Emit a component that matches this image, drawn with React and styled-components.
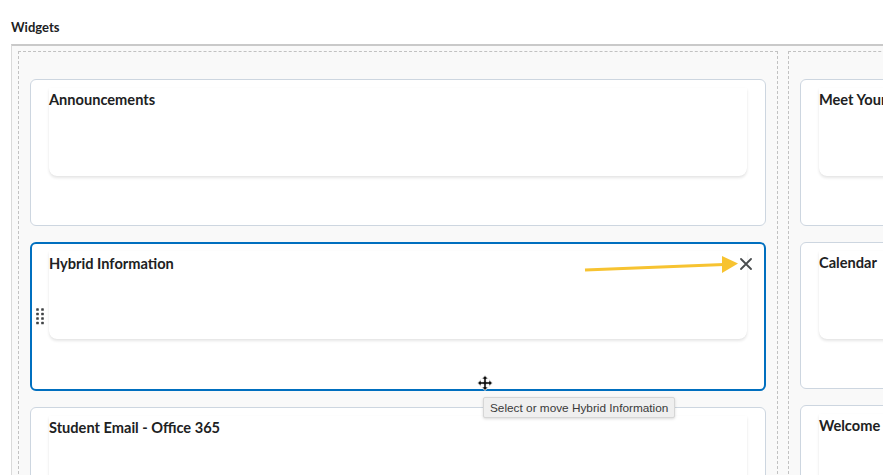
import React from "react";
import styled, { createGlobalStyle } from "styled-components";

const Global = createGlobalStyle`
  html, body { margin: 0; padding: 0; background: #ffffff; overflow: hidden; }
  body { font-family: Lato, "Open Sans", sans-serif; color: #202122; }
`;

const Page = styled.div`
  position: relative;
  width: 883px;
  height: 475px;
  overflow: hidden;
  padding-left: 11px;
  box-sizing: border-box;
`;

const Heading = styled.h2`
  margin: 0;
  padding-top: 19px;
  margin-bottom: 9px;
  font-size: 13px;
  line-height: 16px;
  font-weight: 700;
  color: #202122;
`;

const Board = styled.div`
  display: flex;
  gap: 10px;
  width: 1700px;
  height: 500px;
  box-sizing: border-box;
  padding: 5px 0 0 6px;
  background: #f9f9f9;
  border-top: 2px solid #c9c9c9;
  border-left: 1px solid #dadada;
`;

const Column = styled.div`
  display: flex;
  flex-direction: column;
  gap: 16px;
  width: 760px;
  flex: none;
  box-sizing: border-box;
  padding: 27px 11px 0 11px;
  border: 1px dashed #c2c2c2;
  border-bottom: none;
`;

const Card = styled.div`
  position: relative;
  flex: none;
  box-sizing: border-box;
  height: ${(p) => (p.$active ? 149 : 147)}px;
  background: #ffffff;
  border-radius: 6px;
  border: ${(p) => (p.$active ? "2px solid #006fbf" : "1px solid #cdd6e0")};
  padding: ${(p) => (p.$active ? "7px 17px 0" : "8px 18px 0")};
`;

const Inner = styled.div`
  height: 88px;
  background: #ffffff;
  border-radius: 0 0 8px 8px;
  box-shadow: 0 2px 3px rgba(0, 0, 0, 0.1), 0 0 1px rgba(0, 0, 0, 0.06);
`;

const Title = styled.h3`
  margin: 0;
  padding-top: ${(p) => (p.$active ? 3 : 2)}px;
  font-size: 14.6px;
  line-height: 20px;
  font-weight: 700;
  color: #202122;
  white-space: nowrap;
`;

const CloseButton = styled.button`
  position: absolute;
  top: 14px;
  right: 12px;
  width: 12px;
  height: 12px;
  padding: 0;
  border: none;
  background: none;
  display: flex;
  align-items: center;
  justify-content: center;
`;

const Handle = styled.div`
  position: absolute;
  left: 4px;
  top: 64px;
  width: 8px;
  height: 17px;
  display: flex;
`;

const Overlay = styled.div`
  position: absolute;
  left: 0;
  top: 0;
  width: 883px;
  height: 475px;
  pointer-events: none;
`;

const Tooltip = styled.div`
  position: absolute;
  left: 483px;
  top: 397px;
  height: 21px;
  box-sizing: border-box;
  padding: 0 6px;
  display: flex;
  align-items: center;
  background: #efefef;
  border: 1px solid #d6d6d6;
  border-radius: 2px;
  box-shadow: 0 1px 3px rgba(0, 0, 0, 0.15);
  font-family: "Liberation Sans", Arial, sans-serif;
  font-size: 11.8px;
  color: #3a3a3a;
  white-space: nowrap;
`;

const leftCards = [
  { title: "Announcements" },
  { title: "Hybrid Information", active: true },
  { title: "Student Email - Office 365" },
];
const rightCards = [{ title: "Meet Your Instructor" }, { title: "Calendar" }, { title: "Welcome" }];

function Widget({ title, active }) {
  return (
    <Card $active={active}>
      <Inner>
        <Title $active={active}>{title}</Title>
      </Inner>
      {active && (
        <>
          <CloseButton aria-label="Remove">
            <svg width="12" height="12" viewBox="0 0 12 12">
              <path d="M1 1 L11 11 M11 1 L1 11" stroke="#494c4e" strokeWidth="1.8" strokeLinecap="round" />
            </svg>
          </CloseButton>
          <Handle>
            <svg width="8" height="17" viewBox="0 0 8 17">
              {[1.5, 6, 10.5, 15].map((y) =>
                [1.5, 6.5].map((x) => (
                  <rect key={`${x}-${y}`} x={x - 1.3} y={y - 1.3} width="2.6" height="2.6" rx="0.6" fill="#3f4244" />
                ))
              )}
            </svg>
          </Handle>
        </>
      )}
    </Card>
  );
}

export default function App() {
  return (
    <>
      <Global />
      <Page>
        <Heading>Widgets</Heading>
        <Board>
          <Column>
            {leftCards.map((c) => (
              <Widget key={c.title} {...c} />
            ))}
          </Column>
          <Column>
            {rightCards.map((c) => (
              <Widget key={c.title} title={c.title} />
            ))}
          </Column>
        </Board>
        <Overlay>
          <svg width="883" height="475" viewBox="0 0 883 475">
            <line x1="585" y1="270" x2="724" y2="264.5" stroke="#f7c331" strokeWidth="3.2" />
            <polygon points="722,256 738,263.5 722,273" fill="#f7c331" />
            <g transform="translate(485 383)">
              <path
                d="M0 -7.5 L3.5 -4 L1.3 -4 L1.3 -1.3 L4 -1.3 L4 -3.5 L7.5 0 L4 3.5 L4 1.3 L1.3 1.3 L1.3 4 L3.5 4 L0 7.5 L-3.5 4 L-1.3 4 L-1.3 1.3 L-4 1.3 L-4 3.5 L-7.5 0 L-4 -3.5 L-4 -1.3 L-1.3 -1.3 L-1.3 -4 L-3.5 -4 Z"
                fill="#111"
                stroke="#fff"
                strokeWidth="1"
                strokeLinejoin="round"
              />
            </g>
          </svg>
        </Overlay>
        <Tooltip>Select or move Hybrid Information</Tooltip>
      </Page>
    </>
  );
}
